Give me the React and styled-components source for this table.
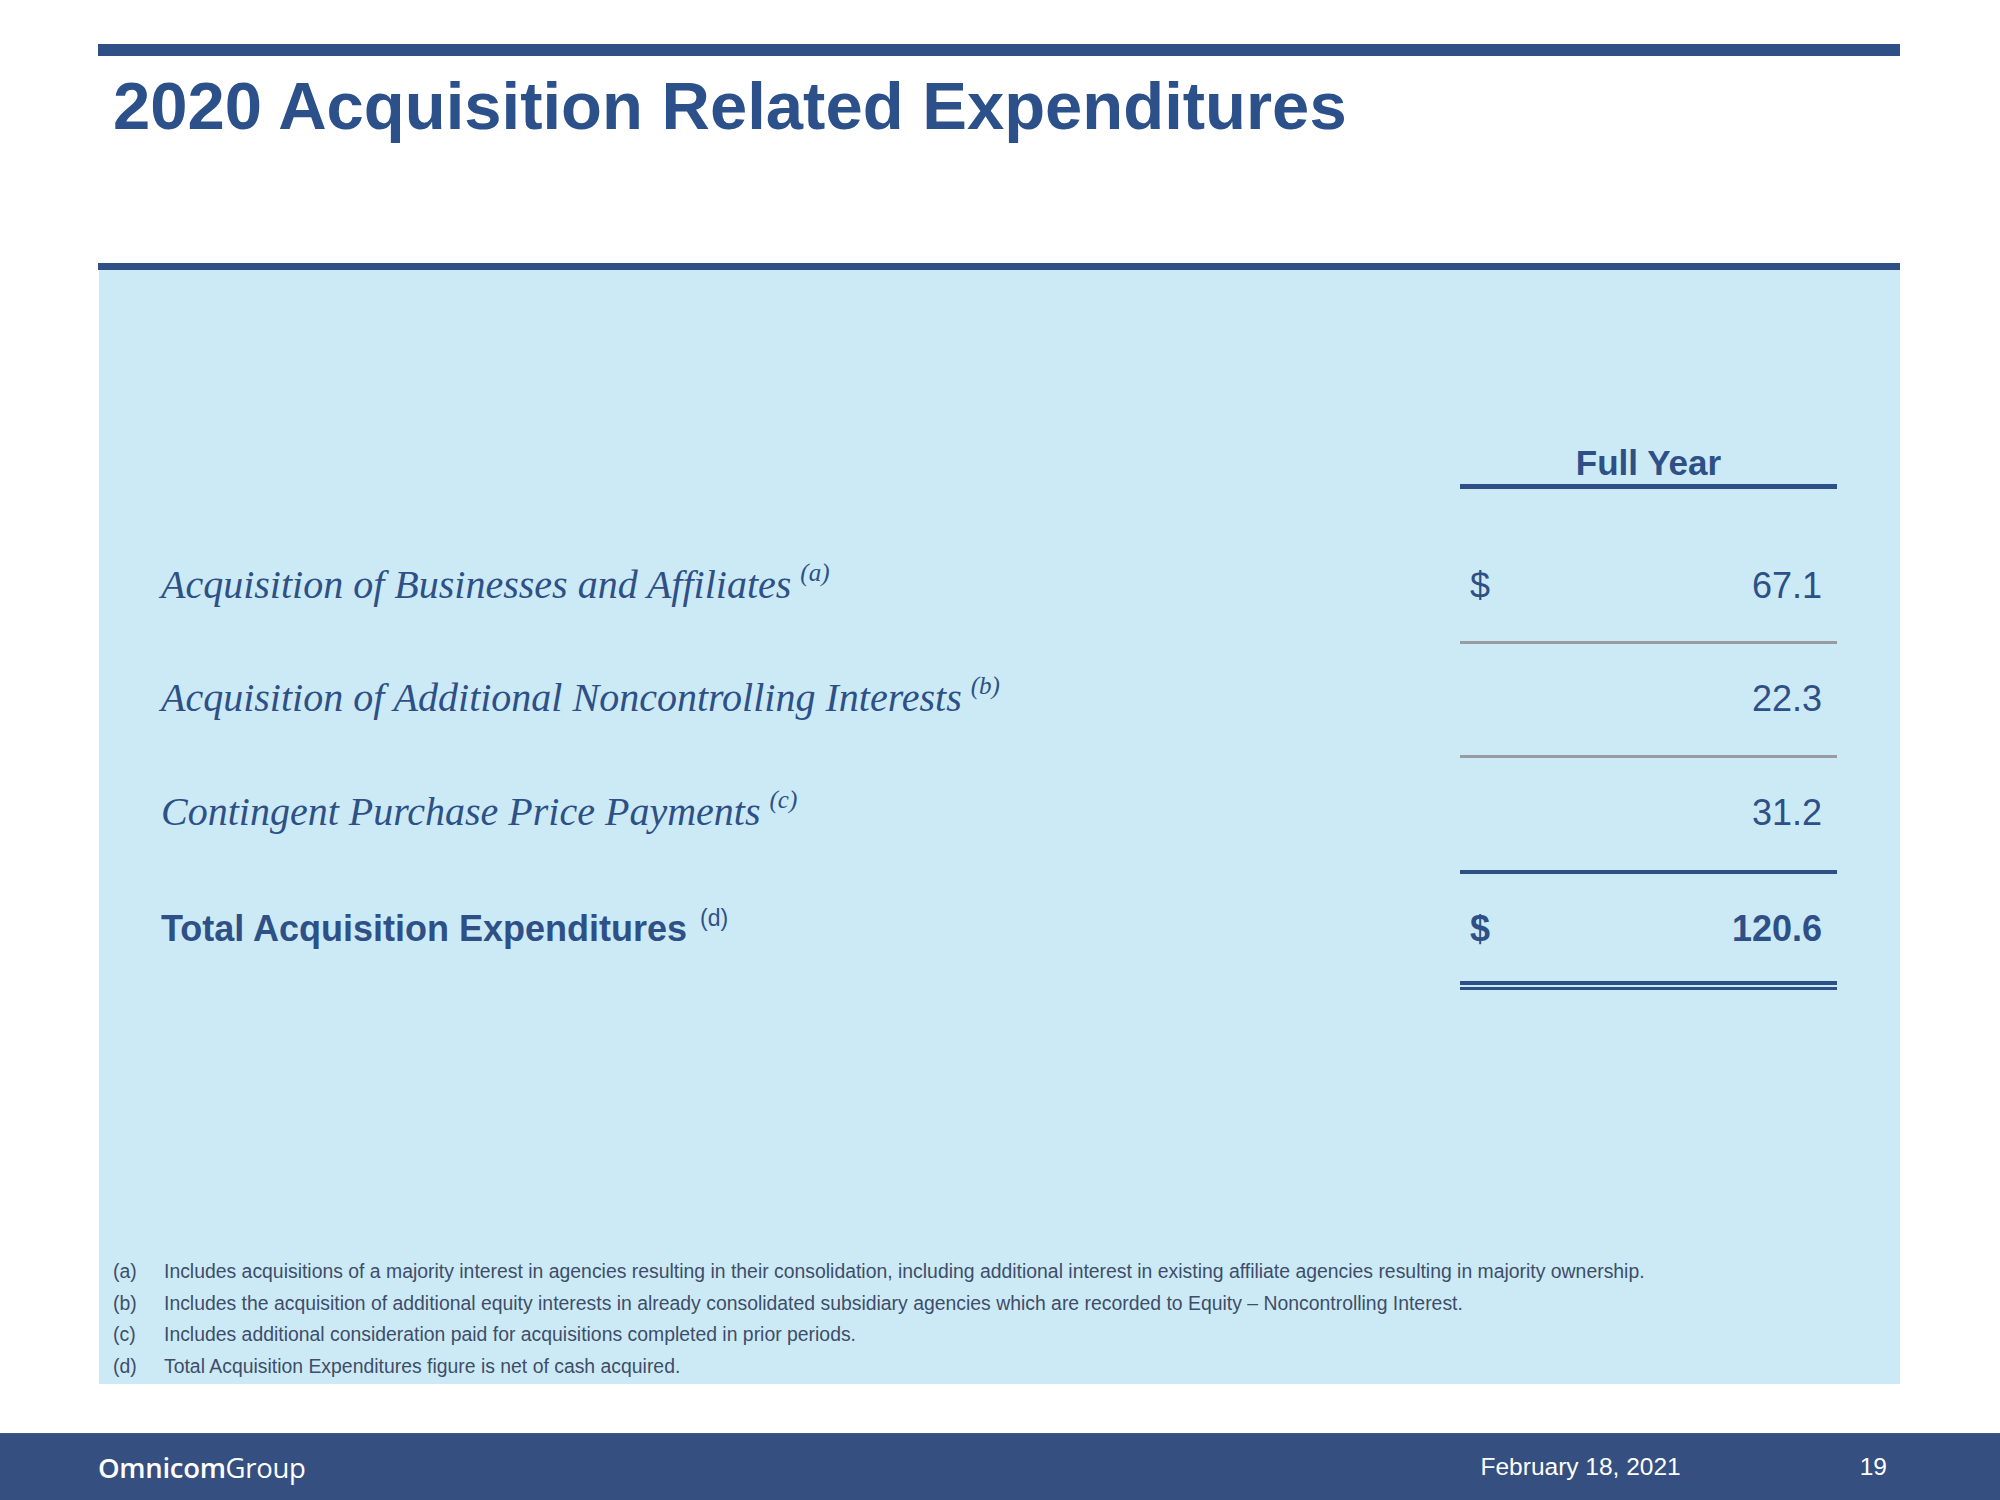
import React from 'react';
import styled, { createGlobalStyle } from 'styled-components';

const Global = createGlobalStyle`
    html, body {
        margin: 0;
        padding: 0;
        background: #ffffff;
    }
`

const BLUE = '#2e5086'
const GREY = '#9a9ba1'

const Slide = styled.div`
    width: 2000px;
    height: 1500px;
    display: flex;
    flex-direction: column;
    padding-top: 44px;
    box-sizing: border-box;
    background: #ffffff;
    font-family: "Liberation Sans", Arial, sans-serif;
`

const Content = styled.div`
    margin: 0 100px 0 98px;
    display: flex;
    flex-direction: column;
`

const Rule = styled.div`
    height: ${props => props.$size}px;
    background: ${BLUE};
`

const Title = styled.h1`
    margin: 17px 0 124px;
    padding-left: 15px;
    font-size: 67px;
    line-height: 66px;
    font-weight: bold;
    color: #2c5089;
`

const Panel = styled.div`
    height: 1114px;
    margin-left: 1px;
    background: #cbeaf6;
    display: flex;
    flex-direction: column;
    padding: 172px 63px 2px 62px;
    box-sizing: border-box;
    color: ${BLUE};
`

const Row = styled.div`
    display: grid;
    grid-template-columns: 1fr 377px;
    align-items: baseline;
`

const Label = styled.div`
    font-family: "Liberation Serif", "Times New Roman", serif;
    font-style: italic;
    font-size: 40px;
    line-height: 44px;
    white-space: nowrap;
`

const TotalLabel = styled.div`
    font-size: 36px;
    line-height: 44px;
    font-weight: bold;
    white-space: nowrap;
`

const Sup = styled.span`
    font-size: ${props => props.$serif ? 25 : 23}px;
    font-weight: normal;
    line-height: 0;
    vertical-align: ${props => props.$serif ? 17 : 15}px;
    margin-left: ${props => props.$serif ? 9 : 13}px;
`

const HeadCell = styled.div`
    grid-column: 2;
    text-align: center;
    font-size: 35px;
    line-height: 42px;
    font-weight: bold;
    border-bottom: 5px solid ${BLUE};
`

const Value = styled.div`
    display: flex;
    align-items: baseline;
    justify-content: space-between;
    padding: ${props => props.$pt}px 15px ${props => props.$pb}px 10px;
    font-size: 36px;
    line-height: 44px;
    font-weight: ${props => props.$bold ? 'bold' : 'normal'};
    border-bottom: ${props => props.$rule};
`

const Dollar = styled.span`
    visibility: ${props => props.$show ? 'visible' : 'hidden'};
`

const DoubleRule = styled.div`
    padding-bottom: 2px;
    border-bottom: 3px solid ${BLUE};
`

const Notes = styled.div`
    margin-top: auto;
    margin-left: -48px;
    color: #3f4d68;
    font-size: 19.4px;
    line-height: 31.5px;
`

const Note = styled.div`
    display: grid;
    grid-template-columns: 51px 1fr;
    white-space: nowrap;
`

const Footer = styled.div`
    margin-top: auto;
    height: 67px;
    background: #344f80;
    border-top: 1px solid #3d5a8c;
    box-sizing: border-box;
    display: flex;
    align-items: center;
    padding: 0 113px 0 98px;
    color: #ffffff;
`

const Logo = styled.div`
    font-family: "Open Sans", "Noto Sans", sans-serif;
    font-size: 27.5px;
    letter-spacing: -0.3px;
    flex: 1;
    & b {
        font-weight: 600;
    }
`

const FooterText = styled.div`
    font-size: 24.5px;
    margin-right: ${props => props.$gap || 0}px;
`

const rows = [
    { label: 'Acquisition of Businesses and Affiliates', note: 'a', dollar: true, value: '67.1', pt: 75, pb: 33, rule: `3px solid ${GREY}` },
    { label: 'Acquisition of Additional Noncontrolling Interests', note: 'b', value: '22.3', pt: 33, pb: 34, rule: `3px solid ${GREY}` },
    { label: 'Contingent Purchase Price Payments', note: 'c', value: '31.2', pt: 33, pb: 35, rule: `4px solid ${BLUE}` },
]

const notes = [
    ['(a)', 'Includes acquisitions of a majority interest in agencies resulting in their consolidation, including additional interest in existing affiliate agencies resulting in majority ownership.'],
    ['(b)', 'Includes the acquisition of additional equity interests in already consolidated subsidiary agencies which are recorded to Equity \u2013 Noncontrolling Interest.'],
    ['(c)', 'Includes additional consideration paid for acquisitions completed in prior periods.'],
    ['(d)', 'Total Acquisition Expenditures figure is net of cash acquired.'],
]

export default function App() {
    return (
        <Slide>
            <Global />
            <Content>
                <Rule $size={12} />
                <Title>2020 Acquisition Related Expenditures</Title>
                <Rule $size={7} />
            </Content>
            <Content>
                <Panel>
                    <Row>
                        <HeadCell>Full Year</HeadCell>
                    </Row>
                    {rows.map(r => (
                        <Row key={r.note}>
                            <Label>{r.label}<Sup $serif>({r.note})</Sup></Label>
                            <Value $pt={r.pt} $pb={r.pb} $rule={r.rule}>
                                <Dollar $show={r.dollar}>$</Dollar>
                                <span>{r.value}</span>
                            </Value>
                        </Row>
                    ))}
                    <Row>
                        <TotalLabel>Total Acquisition Expenditures<Sup>(d)</Sup></TotalLabel>
                        <DoubleRule>
                            <Value $bold $pt={33} $pb={30} $rule={`4px solid ${BLUE}`}>
                                <Dollar $show>$</Dollar>
                                <span>120.6</span>
                            </Value>
                        </DoubleRule>
                    </Row>
                    <Notes>
                        {notes.map(([k, text]) => (
                            <Note key={k}>
                                <span>{k}</span>
                                <span>{text}</span>
                            </Note>
                        ))}
                    </Notes>
                </Panel>
            </Content>
            <Footer>
                <Logo><b>Omnicom</b>Group</Logo>
                <FooterText $gap={179}>February 18, 2021</FooterText>
                <FooterText>19</FooterText>
            </Footer>
        </Slide>
    )
}
